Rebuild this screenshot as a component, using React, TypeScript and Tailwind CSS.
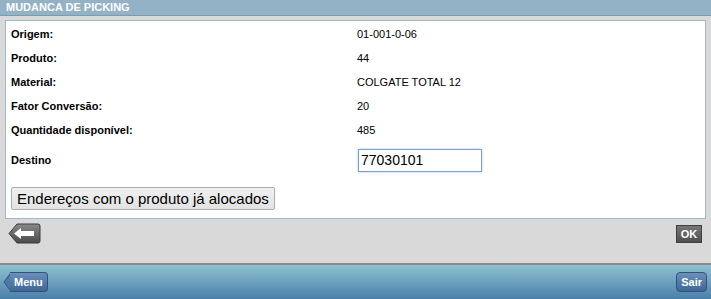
const rows = [
  { label: 'Origem:', value: '01-001-0-06' },
  { label: 'Produto:', value: '44' },
  { label: 'Material:', value: 'COLGATE TOTAL 12' },
  { label: 'Fator Conversão:', value: '20' },
  { label: 'Quantidade disponível:', value: '485' },
];

function BackArrow() {
  return (
    <svg width="33" height="21" viewBox="0 0 33 21">
      <defs>
        <linearGradient id="bk" x1="0" y1="0" x2="0" y2="1">
          <stop offset="0" stopColor="#8a8a8a" />
          <stop offset="1" stopColor="#4a4a4a" />
        </linearGradient>
      </defs>
      <path d="M9 1 H30 Q32 1 32 3 V18 Q32 20 30 20 H9 L1 10.5 Z" fill="url(#bk)" stroke="#3c3c3c" />
      <path d="M6 10.5 L13 5 V8 H26 V13 H13 V16 Z" fill="#ffffff" />
    </svg>
  );
}

export default function App() {
  return (
    <div className="w-[711px] h-[299px] bg-[#d9d9d9] flex flex-col font-['Liberation_Sans',Arial,sans-serif]">
      <div className="h-[16px] bg-[#94b2c6] border-b border-[#7e9aae] px-[6px] flex items-center">
        <span className="text-[11px] font-bold text-white leading-none">MUDANCA DE PICKING</span>
      </div>
      <div className="mx-[5px] mt-[4px] h-[199px] bg-white border border-[#9fb9cc] px-[5px] pt-[1px]">
        {rows.map((r) => (
          <div key={r.label} className="flex items-center h-[24px] text-[11px] text-black">
            <span className="w-[346px] font-bold">{r.label}</span>
            <span>{r.value}</span>
          </div>
        ))}
        <div className="flex items-center h-[36px] text-[11px] text-black">
          <span className="w-[347px] font-bold">Destino</span>
          <div className="w-[124px] h-[23px] border border-[#7f9fd6] shadow-[0_0_2px_#9fbef0] flex items-center px-[2px] text-[14px]">
            77030101
          </div>
        </div>
        <div className="mt-[9px]">
          <button className="h-[23px] px-[5px] bg-gradient-to-b from-[#f0f0f0] to-[#e3e3e3] border border-[#adadad] rounded-[2px] text-[15px] text-black leading-none">
            Endereços com o produto já alocados
          </button>
        </div>
      </div>
      <div className="flex justify-between items-start px-[8px] pt-[4px] pr-[9px] h-[44px]">
        <BackArrow />
        <div className="mt-[2px] w-[26px] h-[18px] bg-gradient-to-b from-[#777] to-[#4f4f4f] border border-[#3f3f3f] flex items-center justify-center text-[11px] font-bold text-white">
          OK
        </div>
      </div>
      <div className="flex-1 border-t-2 border-[#8b8b8b] bg-gradient-to-b from-[#8fc1d1] to-[#4a80aa] flex justify-between items-center px-[3px] pr-[4px]">
        <div className="flex items-center">
          <svg width="8" height="20" viewBox="0 0 8 20" className="-mr-[1px]">
            <path d="M8 0.5 L1 10 L8 19.5 Z" fill="#4f78a4" stroke="#33527a" />
          </svg>
          <div className="h-[20px] px-[4px] bg-gradient-to-b from-[#6a90bb] to-[#3f6796] border border-l-0 border-[#33527a] rounded-r-[4px] flex items-center text-[11px] font-bold text-white">
            Menu
          </div>
        </div>
        <div className="h-[20px] px-[4px] bg-gradient-to-b from-[#6a90bb] to-[#3f6796] border border-[#33527a] rounded-[4px] flex items-center text-[11px] font-bold text-white">
          Sair
        </div>
      </div>
    </div>
  );
}
